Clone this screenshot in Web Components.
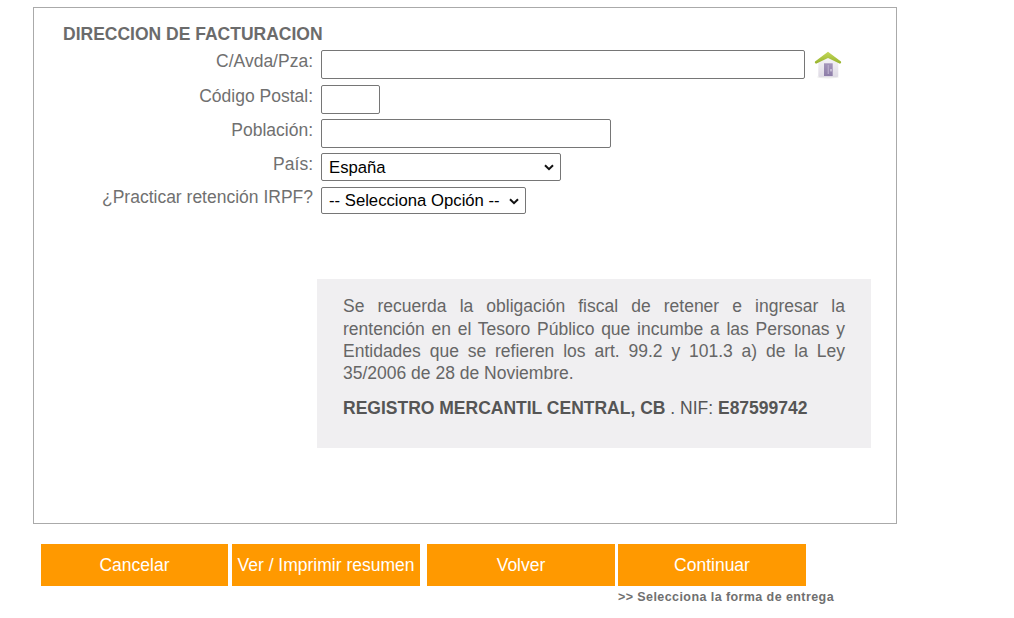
<!DOCTYPE html>
<html lang="es">
<head>
<meta charset="utf-8">
<title>Dirección de facturación</title>
<style>
  html, body { margin: 0; padding: 0; background: #fff; }
  body { font-family: "Liberation Sans", Arial, sans-serif; color: #666; }
</style>
</head>
<body>
<billing-page>
  <billing-panel title-text="DIRECCION DE FACTURACION">
    <form-row label="C/Avda/Pza:" height="35">
      <text-field width="484"></text-field>
      <home-icon></home-icon>
    </form-row>
    <form-row label="Código Postal:" height="34"><text-field width="59"></text-field></form-row>
    <form-row label="Población:" height="34"><text-field width="290"></text-field></form-row>
    <form-row label="País:" height="33"><select-field width="240" height="28" options="España"></select-field></form-row>
    <form-row label="¿Practicar retención IRPF?" height="28"><select-field class="low" width="205" height="27" options="-- Selecciona Opción --"></select-field></form-row>
    <note-box>
      <p>Se recuerda la obligación fiscal de retener e ingresar la rentención en el Tesoro Público que incumbe a las Personas y Entidades que se refieren los art. 99.2 y 101.3 a) de la Ley 35/2006 de 28 de Noviembre.</p>
      <p class="reg"><b>REGISTRO MERCANTIL CENTRAL, CB</b> . NIF: <b>E87599742</b></p>
    </note-box>
  </billing-panel>
  <action-bar>
    <action-button width="187" gap="4">Cancelar</action-button>
    <action-button width="188" gap="7">Ver / Imprimir resumen</action-button>
    <action-button width="188" gap="3">Volver</action-button>
    <action-button width="188" gap="0" hint="&gt;&gt; Selecciona la forma de entrega">Continuar</action-button>
  </action-bar>
</billing-page>

<script>
class BillingPage extends HTMLElement {
  constructor() {
    super();
    this.attachShadow({ mode: "open" }).innerHTML = `
    <style>
      :host { display: block; padding: 7px 0 0 33px; font-family: "Liberation Sans", Arial, sans-serif; }
    </style>
    <slot></slot>`;
  }
}

class BillingPanel extends HTMLElement {
  constructor() {
    super();
    this.attachShadow({ mode: "open" }).innerHTML = `
    <style>
      :host {
        display: block;
        box-sizing: border-box;
        width: 864px;
        height: 517px;
        border: 1px solid #aaa;
        padding: 17px 0 0 29px;
      }
      h2 {
        margin: 0;
        font-size: 17.5px;
        line-height: 18px;
        font-weight: bold;
        color: #6b6b6b;
        height: 25px;
        white-space: nowrap;
      }
    </style>
    <h2>${this.getAttribute("title-text")}</h2>
    <slot></slot>`;
  }
}

class FormRow extends HTMLElement {
  constructor() {
    super();
    this.attachShadow({ mode: "open" }).innerHTML = `
    <style>
      :host {
        display: flex;
        align-items: flex-start;
        height: ${this.getAttribute("height")}px;
      }
      label {
        width: 250px;
        margin-right: 8px;
        font-size: 17.5px;
        line-height: 22px;
        color: #707070;
        white-space: nowrap;
        display: flex;
        justify-content: flex-end;
      }
      .field { display: flex; align-items: flex-start; }
    </style>
    <label>${this.getAttribute("label")}</label>
    <div class="field"><slot></slot></div>`;
  }
}

class TextField extends HTMLElement {
  constructor() {
    super();
    this.attachShadow({ mode: "open" }).innerHTML = `
    <style>
      :host { display: block; }
      input {
        display: block;
        box-sizing: border-box;
        width: ${this.getAttribute("width")}px;
        height: 29px;
        margin: 0;
        border: 1px solid #767676;
        border-radius: 2px;
        background: #fff;
        font: 16px "Liberation Sans", Arial, sans-serif;
      }
    </style>
    <input type="text">`;
  }
}

class SelectField extends HTMLElement {
  constructor() {
    super();
    this.attachShadow({ mode: "open" }).innerHTML = `
    <style>
      :host { display: block; position: relative; }
      :host(.low) { margin-top: 1px; }
      select {
        display: block;
        box-sizing: border-box;
        width: ${this.getAttribute("width")}px;
        height: ${this.getAttribute("height")}px;
        margin: 0;
        padding: 0 0 0 7px;
        border: 1px solid #767676;
        border-radius: 2px;
        background: #fff;
        color: #000;
        font: 16.7px "Liberation Sans", Arial, sans-serif;
        appearance: none;
        -webkit-appearance: none;
      }
      svg { position: absolute; right: 7px; top: 50%; margin-top: -3px; pointer-events: none; }
    </style>
    <select><option>${this.getAttribute("options")}</option></select>
    <svg width="10" height="7" viewBox="0 0 10 7"><path d="M1 1.2 L5 5.2 L9 1.2" fill="none" stroke="#111" stroke-width="2"/></svg>`;
  }
}

class HomeIcon extends HTMLElement {
  constructor() {
    super();
    this.attachShadow({ mode: "open" }).innerHTML = `
    <style>
      :host { display: block; margin: 1px 0 0 9px; width: 28px; height: 28px; }
      svg { display: block; }
    </style>
    <svg width="28" height="28" viewBox="0 0 28 28">
      <defs>
        <linearGradient id="wall" x1="0" y1="0" x2="0" y2="1">
          <stop offset="0" stop-color="#f8f6f9"/>
          <stop offset="1" stop-color="#dedae4"/>
        </linearGradient>
        <linearGradient id="door" x1="0" y1="0" x2="0" y2="1">
          <stop offset="0" stop-color="#a596ba"/>
          <stop offset="1" stop-color="#8d7da8"/>
        </linearGradient>
        <linearGradient id="roof" x1="0" y1="0" x2="0" y2="1">
          <stop offset="0" stop-color="#c4d85a"/>
          <stop offset="1" stop-color="#97b32e"/>
        </linearGradient>
        <filter id="soft" x="-10%" y="-10%" width="120%" height="120%"><feGaussianBlur stdDeviation=".35"/></filter>
      </defs>
      <g filter="url(#soft)">
        <ellipse cx="14" cy="26" rx="11" ry="1.5" fill="#ececec"/>
        <path d="M4.3 10 L14 5 L24.3 10 V24.5 Q24.3 26 22.8 26 H5.8 Q4.3 26 4.3 24.5 Z" fill="url(#wall)"/>
        <rect x="10" y="12.3" width="8.7" height="12.7" fill="url(#door)"/>
        <rect x="13.6" y="14" width="1.4" height="9" fill="#b5a8c8"/>
        <rect x="16.4" y="18" width="1.2" height="2.4" fill="#e2dcea"/>
        <path d="M1 10.6 L14 .8 L27 10.6 Q27.8 12 26 12.7 L14 7 L2 12.7 Q.2 12 1 10.6 Z" fill="url(#roof)"/>
      </g>
    </svg>`;
  }
}

class NoteBox extends HTMLElement {
  constructor() {
    super();
    this.attachShadow({ mode: "open" }).innerHTML = `
    <style>
      :host {
        display: block;
        box-sizing: border-box;
        width: 554px;
        height: 169px;
        margin: 65px 0 0 254px;
        padding: 16.2px 26px 0;
        background: #f0eff1;
        font-size: 17.5px;
        line-height: 22.4px;
        color: #666;
      }
      ::slotted(p) { margin: 0 0 12px; text-align: justify; }
      ::slotted(.reg) { color: #555; }
    </style>
    <slot></slot>`;
  }
}

class ActionBar extends HTMLElement {
  constructor() {
    super();
    this.attachShadow({ mode: "open" }).innerHTML = `
    <style>
      :host { display: flex; align-items: flex-start; margin: 20px 0 0 8px; }
    </style>
    <slot></slot>`;
  }
}

class ActionButton extends HTMLElement {
  constructor() {
    super();
    const hint = this.getAttribute("hint");
    this.attachShadow({ mode: "open" }).innerHTML = `
    <style>
      :host {
        display: block;
        width: ${this.getAttribute("width")}px;
        margin-right: ${this.getAttribute("gap")}px;
      }
      button {
        display: block;
        width: 100%;
        height: 42px;
        padding: 0;
        border: 0;
        background: #ff9900;
        color: #fff;
        font: 17.5px "Liberation Sans", Arial, sans-serif;
        white-space: nowrap;
      }
      .hint {
        margin-top: 4px;
        font-size: 12.5px;
        line-height: 15px;
        font-weight: bold;
        color: #707070;
        white-space: nowrap;
        letter-spacing: .42px;
      }
    </style>
    <button type="button"><slot></slot></button>
    ${hint ? `<div class="hint">${hint.replace(/>/g, "&gt;")}</div>` : ""}`;
  }
}

customElements.define("billing-page", BillingPage);
customElements.define("billing-panel", BillingPanel);
customElements.define("form-row", FormRow);
customElements.define("text-field", TextField);
customElements.define("select-field", SelectField);
customElements.define("home-icon", HomeIcon);
customElements.define("note-box", NoteBox);
customElements.define("action-bar", ActionBar);
customElements.define("action-button", ActionButton);
</script>
</body>
</html>
